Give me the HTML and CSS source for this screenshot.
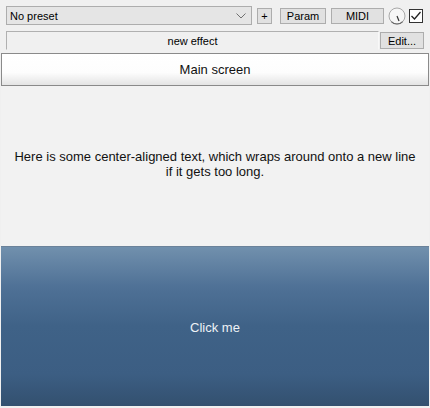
FILE: index.html
```html
<!DOCTYPE html>
<html>
<head>
<meta charset="utf-8">
<link rel="stylesheet" href="styles.css">
</head>
<body>
<div class="app">
  <div class="toolbar">
    <div class="row1">
      <div class="combo">
        <span class="combo-text">No preset</span>
        <svg class="chev" width="10" height="6" viewBox="0 0 10 6"><path d="M0.5 0.5 L5 5 L9.5 0.5" fill="none" stroke="#707070" stroke-width="1"/></svg>
      </div>
      <div class="tbtn plus">+</div>
      <div class="tbtn param">Param</div>
      <div class="tbtn midi">MIDI</div>
      <svg class="knob" width="18" height="18" viewBox="0 0 18 18">
        <circle cx="9" cy="9" r="8" fill="#f6f6f6" stroke="#a8a8a8" stroke-width="1"/>
        <path d="M3.3 14.6 A8 8 0 0 0 14.7 14.6" fill="none" stroke="#666" stroke-width="1.2"/>
        <line x1="9" y1="9" x2="11" y2="14" stroke="#333" stroke-width="1.2"/>
      </svg>
      <div class="check">
        <svg width="12" height="12" viewBox="0 0 12 12"><path d="M1.5 6 L4.5 9 L10.5 2" fill="none" stroke="#222" stroke-width="1.3"/></svg>
      </div>
    </div>
    <div class="row2">
      <div class="namefield">new effect</div>
      <div class="tbtn edit">Edit...</div>
    </div>
  </div>
  <div class="main-btn">Main screen</div>
  <div class="text-area">
    <p>Here is some center-aligned text, which wraps around onto a new line if it gets too long.</p>
  </div>
  <div class="click-btn">Click me</div>
</div>
</body>
</html>
```
FILE: styles.css
```css
html, body {
  margin: 0;
  padding: 0;
  background: #f0f0f0;
}
body {
  width: 430px;
  height: 408px;
  overflow: hidden;
  font-family: "Liberation Sans", Arial, sans-serif;
  color: #000;
}
.app {
  display: flex;
  flex-direction: column;
  height: 408px;
}
.toolbar {
  padding: 6px 4px 0 6px;
  display: flex;
  flex-direction: column;
  gap: 6px;
}
.row1 {
  display: flex;
  align-items: center;
  height: 19px;
}
.combo {
  box-sizing: border-box;
  width: 246px;
  height: 19px;
  border: 1px solid #adadad;
  background: #e5e5e5;
  display: flex;
  align-items: center;
  justify-content: space-between;
  padding: 0 5px 0 3px;
  font-size: 11px;
}
.tbtn {
  box-sizing: border-box;
  height: 16px;
  border: 1px solid #adadad;
  background: #e1e1e1;
  font-size: 11px;
  display: flex;
  align-items: center;
  justify-content: center;
}
.plus { width: 15px; margin-left: 5px; }
.param { width: 46px; margin-left: 8px; }
.midi { width: 53px; margin-left: 5px; }
.knob { margin-left: 4px; }
.check {
  box-sizing: border-box;
  width: 14px;
  height: 14px;
  border: 1px solid #333;
  background: #fff;
  margin-left: 3px;
  display: flex;
  align-items: center;
  justify-content: center;
}
.row2 {
  display: flex;
  align-items: center;
  height: 19px;
}
.namefield {
  box-sizing: border-box;
  width: 373px;
  height: 19px;
  border: 1px solid #b0b0b0;
  border-bottom-color: #f0f0f0;
  border-right-color: #f8f8f8;
  background: #f0f0f0;
  font-size: 11px;
  display: flex;
  align-items: center;
  justify-content: center;
}
.edit {
  width: 44px;
  height: 17px;
  margin-left: 1px;
}
.main-btn {
  box-sizing: border-box;
  margin: 3px 1px 0 1px;
  height: 33px;
  border: 1px solid #8a8a8a;
  background: linear-gradient(to bottom, #ffffff 0%, #fdfdfd 60%, #e4e4e4 100%);
  display: flex;
  align-items: center;
  justify-content: center;
  font-size: 13px;
  color: #111;
}
.text-area {
  flex: 1;
  background: #f2f2f2;
  margin: 0 1px;
  display: flex;
  align-items: center;
  justify-content: center;
}
.text-area p {
  margin: 0 0 4px 0;
  max-width: 406px;
  text-align: center;
  font-size: 13px;
  line-height: 15px;
  color: #111;
}
.click-btn {
  box-sizing: border-box;
  height: 160px;
  margin: 0 1px 2px 1px;
  border-top: 1px solid #6b829a;
  background: linear-gradient(to bottom, #7190ad 0%, #4f7196 25%, #3f6287 50%, #3c5e83 80%, #33506f 100%);
  color: #eef2f6;
  font-size: 13px;
  display: flex;
  justify-content: center;
  padding-top: 73px;
}
```
